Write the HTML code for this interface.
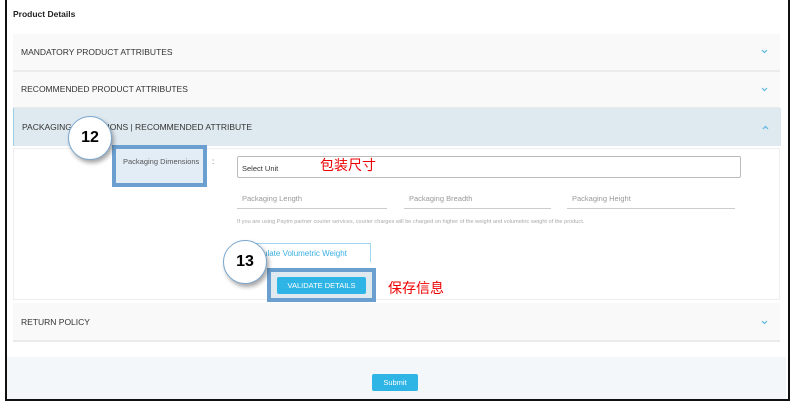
<!DOCTYPE html>
<html><head><style>
body{margin:0;width:793px;height:406px;background:#fff;font-family:"Liberation Sans",sans-serif;position:relative;overflow:hidden}
.a{position:absolute}
.frame{left:5px;top:0;width:781px;height:399px;border:2px solid #111;border-top:none;box-sizing:content-box;z-index:5;pointer-events:none}
.panel{left:13px;width:767px;background:#f9f9f9;border-bottom:2px solid #ebebeb;font-size:8.5px;color:#333}
.panel span{position:absolute;left:8px}
.chev{position:absolute;right:12px}
.circ{width:42px;height:42px;border-radius:50%;background:#fff;border:1.5px solid #7aa7cf;box-shadow:2px 3px 4px rgba(0,0,0,.35);font:bold 16px "Liberation Sans",sans-serif;text-align:center;line-height:42px;color:#000}
.box{border:4px solid #6a9fcf;box-sizing:border-box;background:rgba(220,232,244,.8)}
.cn{color:#e00;font-family:"Liberation Sans","Noto Sans CJK SC",sans-serif;font-size:14px}
.ul{border-bottom:1px solid #ccc;font-size:7.5px;color:#999;height:14px;padding-left:5px}
</style></head><body>
<div class="a frame"></div>
<div class="a" style="left:13px;top:9px;font-size:8.5px;font-weight:bold;color:#222">Product Details</div>
<div class="a panel" style="top:34px;height:36px"><span style="top:13px">MANDATORY PRODUCT ATTRIBUTES</span><svg class="chev" style="top:15px" width="7" height="5"><path d="M1 1L3.5 3.5L6 1" stroke="#5bb8e0" fill="none" stroke-width="1.2"/></svg></div>
<div class="a panel" style="top:72px;height:35px"><span style="top:12px">RECOMMENDED PRODUCT ATTRIBUTES</span><svg class="chev" style="top:15px" width="7" height="5"><path d="M1 1L3.5 3.5L6 1" stroke="#5bb8e0" fill="none" stroke-width="1.2"/></svg></div>
<div class="a panel" style="top:108px;height:38px;background:#dfe9f0;border-left:1px solid #9cd0ea;border-bottom:none"><span style="top:14px">PACKAGING DIMENSIONS | RECOMMENDED ATTRIBUTE</span><svg class="chev" style="top:17px" width="7" height="5"><path d="M1 4L3.5 1.5L6 4" stroke="#5bb8e0" fill="none" stroke-width="1.2"/></svg></div>
<div class="a" style="left:13px;top:148px;width:765px;height:150px;border:1px solid #eee"></div>
<div class="a box" style="left:112px;top:145px;width:95px;height:42px"></div>
<div class="a" style="left:123px;top:157px;font-size:7.5px;color:#555">Packaging Dimensions</div>
<div class="a" style="left:212px;top:157px;font-size:8px;color:#555">:</div>
<div class="a" style="left:237px;top:156px;width:504px;height:22px;border:1px solid #bbb;border-radius:2px;box-sizing:border-box;font-size:7.5px;color:#333;padding:7px 4px">Select Unit</div>
<div class="a cn" style="left:320px;top:155px">包装尺寸</div>
<div class="a ul" style="left:237px;top:194px;width:145px">Packaging Length</div>
<div class="a ul" style="left:404px;top:194px;width:142px">Packaging Breadth</div>
<div class="a ul" style="left:567px;top:194px;width:163px">Packaging Height</div>
<div class="a" style="left:237px;top:219px;font-size:5.6px;color:#aaa">If you are using Paytm partner courier services, courier charges will be charged on higher of the weight and volumetric weight of the product.</div>
<div class="a" style="left:236px;top:243px;width:135px;height:19px;border:1px solid #9fd8f0;border-bottom:none;box-sizing:border-box;font-size:8px;color:#3ab0e2;padding:5px 0 0 10px">Calculate Volumetric Weight</div>
<div class="a box" style="left:267px;top:268px;width:109px;height:34px;background:#dfe9f0"></div>
<div class="a" style="left:277px;top:277px;width:89px;height:17px;background:#2fb4e6;border-radius:2px;color:#fff;font-size:7.5px;text-align:center;line-height:17px">VALIDATE DETAILS</div>
<div class="a cn" style="left:388px;top:278px">保存信息</div>
<div class="a circ" style="left:68px;top:116px">12</div>
<div class="a circ" style="left:223px;top:240px">13</div>
<div class="a panel" style="top:303px;height:37px"><span style="top:14px">RETURN POLICY</span><svg class="chev" style="top:17px" width="7" height="5"><path d="M1 1L3.5 3.5L6 1" stroke="#5bb8e0" fill="none" stroke-width="1.2"/></svg></div>
<div class="a" style="left:7px;top:357px;width:779px;height:42px;background:#f4f7fa"></div>
<div class="a" style="left:372px;top:374px;width:46px;height:17px;background:#2fb4e6;border-radius:2px;color:#fff;font-size:7.5px;text-align:center;line-height:17px">Submit</div>
</body></html>
